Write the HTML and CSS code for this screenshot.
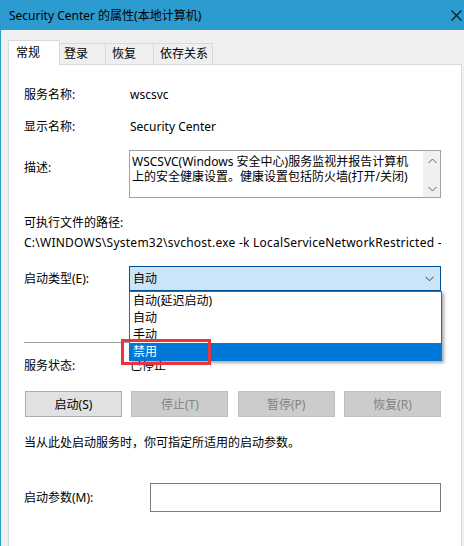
FILE: index.html
```html
<!DOCTYPE html>
<html lang="zh-CN">
<head>
<meta charset="utf-8">
<title>Security Center 的属性(本地计算机)</title>
<link rel="stylesheet" href="styles.css">
</head>
<body>
<div class="window">
  <div class="titlebar">
    <span class="title">Security Center 的属性(本地计算机)</span>
    <svg class="close" width="11" height="11" viewBox="0 0 11 11"><path d="M0.5 0.5L10.5 10.5M10.5 0.5L0.5 10.5" stroke="#111" stroke-width="1.1" fill="none"/></svg>
  </div>
  <div class="tabs">
    <div class="tab active">常规</div>
    <div class="tab t2">登录</div>
    <div class="tab t3">恢复</div>
    <div class="tab t4">依存关系</div>
  </div>
  <div class="panel">
    <div class="row">
      <span class="label">服务名称:</span><span class="value">wscsvc</span>
    </div>
    <div class="row gap15">
      <span class="label">显示名称:</span><span class="value">Security Center</span>
    </div>
    <div class="row desc-row gap15">
      <span class="label desc-label">描述:</span>
      <div class="desc-box">
        <div class="desc-text">WSCSVC(Windows 安全中心)服务监视并报告计算机<br>上的安全健康设置。健康设置包括防火墙(打开/关闭)</div>
        <div class="vscroll">
          <svg width="9" height="6" viewBox="0 0 9 6"><path d="M0.5 5L4.5 1L8.5 5" fill="none" stroke="#606060"/></svg>
          <svg width="9" height="6" viewBox="0 0 9 6"><path d="M0.5 1L4.5 5L8.5 1" fill="none" stroke="#606060"/></svg>
        </div>
      </div>
    </div>
    <div class="row gap16">
      <span class="label">可执行文件的路径:</span>
    </div>
    <div class="path">C:\WINDOWS\System32\svchost.exe -k LocalServiceNetworkRestricted -p</div>
    <div class="row combo-row">
      <span class="label">启动类型(E):</span>
      <div class="combo-wrap">
        <div class="combo">
          <span>自动</span>
          <svg width="9" height="6" viewBox="0 0 9 6"><path d="M0.5 0.8L4.5 4.8L8.5 0.8" fill="none" stroke="#3c3c3c"/></svg>
        </div>
        <ul class="dropdown">
          <li>自动(延迟启动)</li>
          <li>自动</li>
          <li>手动</li>
          <li class="selected">禁用</li>
        </ul>
        <div class="highlight-box"></div>
      </div>
    </div>
    <div class="separator"></div>
    <div class="row gap14">
      <span class="label">服务状态:</span><span class="value">已停止</span>
    </div>
    <div class="buttons">
      <div class="btn">启动(S)</div>
      <div class="btn disabled">停止(T)</div>
      <div class="btn disabled">暂停(P)</div>
      <div class="btn disabled">恢复(R)</div>
    </div>
    <div class="note">当从此处启动服务时，你可指定所适用的启动参数。</div>
    <div class="row param-row">
      <span class="label param-label">启动参数(M):</span>
      <div class="param-input"></div>
    </div>
  </div>
</div>
</body>
</html>
```
FILE: styles.css
```css
* { box-sizing: border-box; }
html, body { margin: 0; padding: 0; }
body {
  font-family: "Noto Sans", "Noto Sans CJK SC", sans-serif;
  font-size: 12px;
  color: #000;
  background: #efefef;
}
.window {
  width: 464px;
  height: 546px;
  overflow: hidden;
  background: #efefef;
  border-left: 1px solid #2b9bd0;
}
.titlebar {
  height: 30px;
  background: #2b9bd0;
  display: flex;
  align-items: center;
  justify-content: space-between;
  padding: 0 2px 0 8px;
}
.title { line-height: 17px; white-space: nowrap; }
.close { display: block; }

.tabs {
  display: flex;
  align-items: flex-end;
  margin: 10px 0 0 7px;
  height: 24px;
}
.tab {
  height: 21px;
  border: 1px solid #d9d9d9;
  border-bottom: none;
  background: #efefef;
  line-height: 17px;
  padding-top: 1px;
  white-space: nowrap;
  margin-left: -1px;
}
.tab.active {
  position: relative;
  z-index: 1;
  height: 25px;
  margin-bottom: -1px;
  margin-left: 0;
  width: 52px;
  background: #fff;
  padding-top: 3px;
  padding-left: 7px;
}
.tab.t2 { width: 47px; padding-left: 4px; }
.tab.t3 { width: 49px; padding-left: 6px; }
.tab.t4 { width: 60px; padding-left: 6px; }

.panel {
  margin-left: 7px;
  width: 454px;
  height: 600px;
  background: #fff;
  border: 1px solid #d9d9d9;
  padding: 21px 20px 0 15px;
}
.row {
  display: flex;
  align-items: center;
  line-height: 17px;
}
.gap14 { margin-top: 14px; }
.gap15 { margin-top: 15px; }
.gap16 { margin-top: 16px; }
.label { width: 106px; flex: none; white-space: nowrap; }
.value { white-space: nowrap; }

.desc-row { align-items: flex-start; }
.desc-label { width: 105px; padding-top: 9px; }
.desc-box {
  width: 312px;
  height: 48px;
  border: 1px solid #a0a0a0;
  display: flex;
}
.desc-text {
  flex: 1;
  padding: 3px 0 0 2px;
  line-height: 15px;
  white-space: nowrap;
  overflow: hidden;
}
.vscroll {
  width: 17px;
  flex: none;
  background: #f0f0f0;
  display: flex;
  flex-direction: column;
  justify-content: space-between;
  align-items: center;
  padding: 7px 0 5px 1px;
}
.vscroll svg { display: block; }

.path {
  margin-top: 3px;
  width: 417px;
  line-height: 17px;
  letter-spacing: 0.25px;
  white-space: nowrap;
  overflow: hidden;
}

.combo-row { margin-top: 15px; }
.combo-row .label { width: 105px; }
.combo-wrap {
  position: relative;
  width: 312px;
}
.combo {
  height: 25px;
  background: #cce4f7;
  border: 1px solid #005499;
  display: flex;
  align-items: center;
  justify-content: space-between;
  padding: 0 6px 0 3px;
}
.dropdown {
  position: absolute;
  z-index: 2;
  left: 0;
  top: 25px;
  width: 313px;
  margin: 0;
  padding: 0;
  list-style: none;
  background: #fff;
  border: 1px solid #0078d7;
  box-shadow: 2px 2px 3px rgba(0, 0, 0, 0.35);
}
.dropdown li {
  height: 17px;
  line-height: 17px;
  padding-left: 3px;
  white-space: nowrap;
}
.dropdown li.selected {
  background: #0078d7;
  color: #fff;
}
.highlight-box {
  position: absolute;
  z-index: 3;
  left: -8px;
  top: 73px;
  width: 90px;
  height: 26px;
  border: 3px solid #e8363c;
}

.separator {
  margin-top: 51px;
  width: 417px;
  height: 1px;
  background: #a0a0a0;
}

.buttons {
  margin-top: 17px;
  margin-left: 1px;
  width: 416px;
  display: flex;
  justify-content: space-between;
}
.btn {
  width: 97px;
  height: 26px;
  border: 1px solid #adadad;
  background: #e1e1e1;
  display: flex;
  align-items: center;
  justify-content: center;
  line-height: 17px;
  white-space: nowrap;
}
.btn.disabled {
  background: #cccccc;
  border-color: #bfbfbf;
  color: #838383;
}

.note {
  margin-top: 17px;
  line-height: 17px;
  white-space: nowrap;
}

.param-row { margin-top: 32px; }
.param-label { width: 126px; }
.param-input {
  width: 292px;
  height: 29px;
  border: 1px solid #7a7a7a;
  background: #fff;
}
```
